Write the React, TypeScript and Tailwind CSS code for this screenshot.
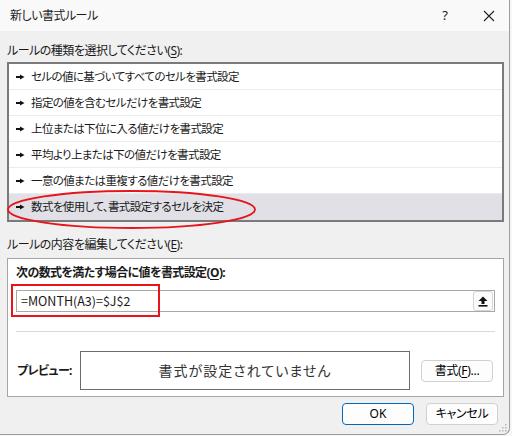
const rules = [
  "セルの値に基づいてすべてのセルを書式設定",
  "指定の値を含むセルだけを書式設定",
  "上位または下位に入る値だけを書式設定",
  "平均より上または下の値だけを書式設定",
  "一意の値または重複する値だけを書式設定",
  "数式を使用して、書式設定するセルを決定",
];

function Pointer() {
  return (
    <svg width="9" height="6" viewBox="0 0 9 6" className="shrink-0">
      <rect x="0" y="2" width="5" height="2" fill="#111" />
      <path d="M4 0.5 L8.5 3 L4 5.5 Z" fill="#111" />
    </svg>
  );
}

function Btn({ children, primary }: { children: React.ReactNode; primary?: boolean }) {
  return (
    <button
      className={
        primary
          ? "w-[72px] h-[22px] rounded-[4px] bg-[#fdfdfd] border border-[#0067c0] text-[12px] text-black flex items-center justify-center"
          : "w-[72px] h-[22px] rounded-[4px] bg-[#fdfdfd] border border-[#d0d0d0] text-[12px] tracking-[-0.3px] text-black flex items-center justify-center"
      }
    >
      {children}
    </button>
  );
}

export default function App() {
  return (
    <div className="w-[512px] h-[436px] bg-[#f6f6f6] [font-family:'Noto_Sans','Noto_Sans_CJK_JP',sans-serif] [font-feature-settings:'palt'] text-[#1a1a1a] overflow-hidden">
      <div className="relative w-[510px] h-[435px] bg-[#f0f0f0] border-r border-b border-[#9c9c9c] rounded-br-[7px] flex flex-col">
        {/* title bar */}
        <div className="h-[31px] bg-[#f9f9f9] flex items-center pl-[10px] pr-[14px] shrink-0">
          <span className="text-[12px] tracking-[-0.5px]">新しい書式ルール</span>
          <span className="ml-auto text-[13px] mr-[35px]">?</span>
          <svg width="12" height="12" viewBox="0 0 12 12">
            <path d="M1 1 L11 11 M11 1 L1 11" stroke="#222" strokeWidth="1.1" />
          </svg>
        </div>

        <div className="flex flex-col pl-[7px] pr-[5px]">
          <div className="mt-[12px] h-[16px] leading-[16px] text-[12px] tracking-[-0.5px]">
            ルールの種類を選択してください(<span className="underline underline-offset-2">S</span>):
          </div>

          <div className="mt-[3px] border-2 border-[#7a7a7a] bg-white flex flex-col">
            {rules.map((r, i) => (
              <div
                key={r}
                className={
                  i === rules.length - 1
                    ? "h-[26px] flex items-center gap-[6px] pl-[7px] text-[11.5px] tracking-[-0.6px] bg-[#e0e0e6]"
                    : "h-[26px] flex items-center gap-[6px] pl-[7px] text-[11.5px] tracking-[-0.6px] border-b border-[#ececec]"
                }
              >
                <Pointer />
                <span>{r}</span>
              </div>
            ))}
          </div>

          <div className="mt-[15px] h-[16px] leading-[16px] text-[12px] tracking-[-0.5px]">
            ルールの内容を編集してください(<span className="underline underline-offset-2">E</span>):
          </div>

          <div className="mt-[5px] border border-[#a5a5a5] bg-white px-[8px] pt-[6px] pb-[6px] flex flex-col">
            <div className="h-[16px] leading-[16px] text-[12px] tracking-[-0.6px] font-bold">
              次の数式を満たす場合に値を書式設定(<span className="underline underline-offset-2">O</span>):
            </div>
            <div className="mt-[9px] h-[22px] border border-[#a8a8a8] flex items-center pl-[4px] pr-[1px]">
              <span className="text-[12.5px] [font-family:'Noto_Sans_CJK_JP',sans-serif]">=MONTH(A3)=$J$2</span>
              <div className="ml-auto w-[20px] h-[20px] rounded-[3px] border border-[#d4d4d4] bg-[#fbfbfb] flex items-center justify-center">
                <svg width="10" height="11" viewBox="0 0 10 11">
                  <path d="M5 0.5 L9.5 5 L6.5 5 L6.5 8 L3.5 8 L3.5 5 L0.5 5 Z" fill="#111" />
                  <rect x="0.5" y="9" width="9" height="1.6" fill="#111" />
                </svg>
              </div>
            </div>
            <div className="mt-[19px] h-px bg-[#d9d9d9]" />
            <div className="mt-[19px] flex items-center">
              <div className="w-[64px] text-[12px] tracking-[-0.6px] font-bold pl-[1px]">プレビュー:</div>
              <div className="w-[330px] h-[39px] border border-[#6b6b6b] flex items-center justify-center text-[14px] tracking-[1px] text-[#333]">
                書式が設定されていません
              </div>
              <div className="ml-[11px]">
                <Btn>
                  書式(<span className="underline underline-offset-2">F</span>)...
                </Btn>
              </div>
            </div>
          </div>

          <div className="mt-[6px] flex justify-end gap-[12px] pr-[6px]">
            <Btn primary>OK</Btn>
            <Btn>キャンセル</Btn>
          </div>
        </div>

        {/* resize grip */}
        <svg className="absolute right-[2px] bottom-[2px]" width="9" height="9" viewBox="0 0 9 9">
          <g fill="#b5b5b5">
            <rect x="7" y="1" width="1.5" height="1.5" />
            <rect x="4" y="4" width="1.5" height="1.5" />
            <rect x="7" y="4" width="1.5" height="1.5" />
            <rect x="1" y="7" width="1.5" height="1.5" />
            <rect x="4" y="7" width="1.5" height="1.5" />
            <rect x="7" y="7" width="1.5" height="1.5" />
          </g>
        </svg>

        {/* red annotations */}
        <svg className="absolute left-[6px] top-[189px] pointer-events-none" width="251" height="41" viewBox="0 0 251 41">
          <ellipse cx="125.5" cy="20.5" rx="123.5" ry="18.5" fill="none" stroke="#e8141c" strokeWidth="1.8" />
        </svg>
        <div className="absolute left-[11px] top-[284px] w-[149px] h-[33px] border-2 border-[#e8141c] pointer-events-none" />
      </div>
    </div>
  );
}
